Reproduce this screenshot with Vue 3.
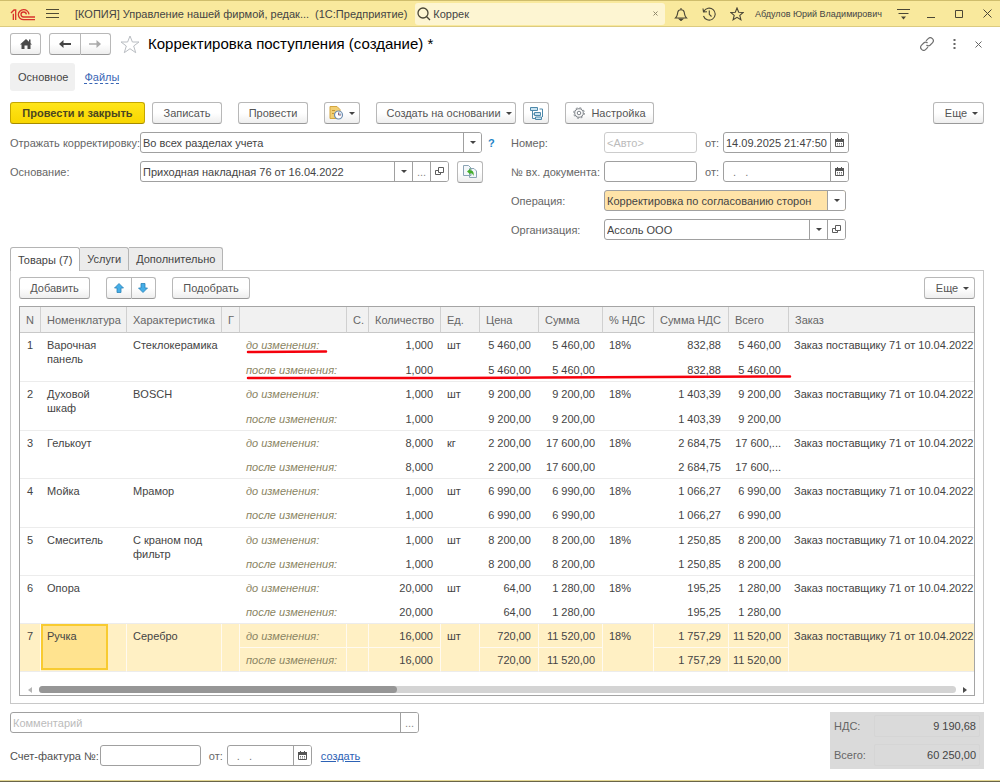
<script setup>
import { ref } from 'vue'

const search = ref('Коррек')
const scope = ref('Во всех разделах учета')
const basis = ref('Приходная накладная 76 от 16.04.2022')
const docDate = ref('14.09.2025 21:47:50')
const operation = ref('Корректировка по согласованию сторон')
const organization = ref('Ассоль ООО')
const selected = ref(7)

const order = 'Заказ поставщику 71 от 10.04.2022'
const rows = [
  { n: 1, name: 'Варочная панель', spec: 'Стеклокерамика', qty: '1,000', unit: 'шт', price: '5 460,00', sum: '5 460,00', vat: '832,88', total: '5 460,00' },
  { n: 2, name: 'Духовой шкаф', spec: 'BOSCH', qty: '1,000', unit: 'шт', price: '9 200,00', sum: '9 200,00', vat: '1 403,39', total: '9 200,00' },
  { n: 3, name: 'Гелькоут', spec: '', qty: '8,000', unit: 'кг', price: '2 200,00', sum: '17 600,00', vat: '2 684,75', total: '17 600,...' },
  { n: 4, name: 'Мойка', spec: 'Мрамор', qty: '1,000', unit: 'шт', price: '6 990,00', sum: '6 990,00', vat: '1 066,27', total: '6 990,00' },
  { n: 5, name: 'Смеситель', spec: 'С краном под фильтр', qty: '1,000', unit: 'шт', price: '8 200,00', sum: '8 200,00', vat: '1 250,85', total: '8 200,00' },
  { n: 6, name: 'Опора', spec: '', qty: '20,000', unit: 'шт', price: '64,00', sum: '1 280,00', vat: '195,25', total: '1 280,00' },
  { n: 7, name: 'Ручка', spec: 'Серебро', qty: '16,000', unit: 'шт', price: '720,00', sum: '11 520,00', vat: '1 757,29', total: '11 520,00' },
]
</script>

<template>
  <div class="window">
    <header class="topbar">
      <svg class="logo" width="26" height="14" viewBox="0 0 78 42" fill="none" stroke="#d8342c" stroke-width="4">
        <path d="M3 18L12 9H17V39M10 20V39" />
        <path d="M57 22A16 15 0 1 0 41 38H75M49 22A8 7.500 0 1 0 41 30H75" />
      </svg>
      <button class="bare menu" aria-label="Меню">
        <svg width="13" height="11" viewBox="0 0 13 11" stroke="#4f4a34" fill="none"><path d="M0 1.500H13M0 5.500H13M0 9.500H13" /></svg>
      </button>
      <span class="app">[КОПИЯ] Управление нашей фирмой, редак...</span>
      <span class="platform">(1С:Предприятие)</span>
      <div class="search">
        <svg width="14" height="14" viewBox="0 0 14 14" fill="none" stroke="#4a4636" stroke-width="1.300"><circle cx="6" cy="6" r="5" /><path d="M9.700 9.700L13 13" /></svg>
        <input v-model="search" aria-label="Поиск">
        <button class="bare" aria-label="Очистить">
          <svg width="5" height="5" viewBox="0 0 5 5" stroke="#8e876a" fill="none"><path d="M.5 .5L4.500 4.500M4.500 .5L.5 4.500" /></svg>
        </button>
      </div>
      <div class="system">
        <button class="bare" aria-label="Уведомления">
          <svg width="14" height="14" viewBox="0 0 14 14" fill="none" stroke="#4a4636" stroke-width="1.100"><path d="M1.500 11H12.500C10.500 9 10.700 8 10.300 5.500C10 3.600 8.800 2.700 7 2.700S4 3.600 3.700 5.500C3.300 8 3.500 9 1.500 11ZM7 2.500V1" /><path d="M5.300 12H8.700L7 13.500Z" fill="#4a4636" /></svg>
        </button>
        <button class="bare" aria-label="История">
          <svg width="14" height="14" viewBox="0 0 14 14" fill="none" stroke="#4a4636" stroke-width="1.100"><path d="M1.800 4.500A6 6 0 1 1 1.500 9M1 1.500L1.500 5L5 4.700M7.300 3.500V7.300L9.500 9.500" /></svg>
        </button>
        <button class="bare" aria-label="Избранное">
          <svg width="14" height="14" viewBox="0 0 14 14" fill="none" stroke="#4a4636" stroke-width="1.100"><path d="M7 1L8.700 5.200L13.200 5.500L9.800 8.400L10.900 12.800L7 10.400L3.100 12.800L4.200 8.400L.8 5.500L5.300 5.200Z" /></svg>
        </button>
        <span class="user">Абдулов Юрий Владимирович</span>
        <button class="bare" aria-label="Настройки">
          <svg width="13" height="12" viewBox="0 0 13 12" fill="none" stroke="#4a4636"><path d="M0 1.500H13M1.500 5.500H11.500" /><path d="M4 8.500H9L6.500 11.500Z" fill="#4a4636" stroke="none" /></svg>
        </button>
        <button class="bare" aria-label="Свернуть">
          <svg width="8" height="9" viewBox="0 0 8 9" stroke="#4a4636" fill="none"><path d="M0 8.500H8" /></svg>
        </button>
        <button class="bare" aria-label="Развернуть">
          <svg width="8" height="8" viewBox="0 0 8 8" stroke="#4a4636" fill="none"><path d="M.5 .5H7.500V7.500H.5Z" /></svg>
        </button>
        <button class="bare" aria-label="Закрыть окно">
          <svg width="9" height="9" viewBox="0 0 9 9" stroke="#4a4636" fill="none"><path d="M.5 .5L8.500 8.500M8.500 .5L.5 8.500" /></svg>
        </button>
      </div>
    </header>

    <main class="form">
      <div class="titlebar">
        <button class="btn home" aria-label="Домой">
          <svg width="12" height="10" viewBox="0 0 12 10" fill="#4a4a4a"><path d="M6 0L12 5.500H10.500V10H7.500V6.500H4.500V10H1.500V5.500H0Z" /><path d="M9 .5H10.500V4H9Z" /></svg>
        </button>
        <div class="pair">
          <button class="btn" aria-label="Назад">
            <svg width="12" height="8" viewBox="0 0 12 8" fill="#444"><path d="M4.500 0V3H12V5H4.500V8L0 4Z" /></svg>
          </button>
          <button class="btn" aria-label="Вперед">
            <svg width="12" height="8" viewBox="0 0 12 8" fill="#aaa"><path d="M7.500 0V3.200H0V4.800H7.500V8L12 4Z" /></svg>
          </button>
        </div>
        <button class="bare star" aria-label="В избранное">
          <svg width="20" height="19" viewBox="0 0 20 19" fill="none" stroke="#b9bdc2"><path d="M10 1L12.400 7H19L13.700 11L15.700 17.700L10 13.700L4.300 17.700L6.300 11L1 7H7.600Z" /></svg>
        </button>
        <h1>Корректировка поступления (создание) *</h1>
        <div class="titletools">
          <button class="bare" aria-label="Ссылка">
            <svg width="14" height="14" viewBox="0 0 14 14" fill="none" stroke="#707070" stroke-width="1.200"><path d="M6 3.800L8.200 1.600A2.400 2.400 0 0 1 12.400 5.800L10 8.200A2.400 2.400 0 0 1 6.500 8" /><path d="M8 10.200L5.800 12.400A2.400 2.400 0 0 1 1.600 8.200L4 5.800A2.400 2.400 0 0 1 7.500 6" /></svg>
          </button>
          <button class="bare" aria-label="Действия">
            <svg width="3" height="10" viewBox="0 0 3 10" fill="#666"><path d="M.5 0H2.500V2H.5ZM.5 4H2.500V6H.5ZM.5 8H2.500V10H.5Z" /></svg>
          </button>
          <button class="bare" aria-label="Закрыть">
            <svg width="7" height="7" viewBox="0 0 7 7" stroke="#666" fill="none"><path d="M.5 .5L6.500 6.500M6.500 .5L.5 6.500" /></svg>
          </button>
        </div>
      </div>

      <nav class="sections">
        <a class="current" href="#main">Основное</a>
        <a class="files" href="#files">Файлы</a>
      </nav>

      <div class="commands">
        <button class="btn primary">Провести и закрыть</button>
        <button class="btn write">Записать</button>
        <button class="btn post">Провести</button>
        <button class="btn report" aria-label="Отчеты">
          <svg width="15" height="14" viewBox="0 0 15 14" fill="none"><path d="M1 .5H8L11 3.500V12.500H1Z" fill="#f2cf73" stroke="#d3a640" /><path d="M3 4.500H6M3 7.500H5" stroke="#c59636" /><circle cx="9.500" cy="9" r="4" fill="#fff" stroke="#6d8db0" stroke-width="1.200" /><path d="M9.500 6V9H12.500A3 3 0 0 0 9.500 6Z" fill="#bed4e8" /><path d="M9.500 6.500V9H12" stroke="#8f6476" /></svg>
          <span class="caret"></span>
        </button>
        <button class="btn create">Создать на основании <span class="caret"></span></button>
        <button class="btn structure" aria-label="Структура подчиненности">
          <svg width="13" height="13" viewBox="0 0 13 13" fill="#c9e3f1" stroke="#4d88aa"><path d="M.5 .5H7.500V3.500H.5ZM4.500 5.500H10.500V8.500H4.500ZM5.500 10H11.500V12.500H5.500Z" /><path d="M2.500 3.500V11.500H5.500M2.500 7H4.500M9.500 2H12.500V10" fill="none" /></svg>
        </button>
        <button class="btn settings">
          <svg width="12" height="12" viewBox="0 0 12 12" fill="none" stroke="#7b8086"><circle cx="6" cy="6" r="4.300" /><circle cx="6" cy="6" r="1.800" /><circle cx="6" cy="6" r="5.300" stroke-dasharray="2 2.160" /></svg>
          Настройка
        </button>
        <button class="btn more">Еще <span class="caret"></span></button>
      </div>

      <div class="fields">
        <div class="left">
          <label for="scope">Отражать корректировку:</label>
          <div class="line">
            <div class="box drop wide">
              <select id="scope" v-model="scope"><option>Во всех разделах учета</option></select>
              <span class="arrow"><span class="caret"></span></span>
            </div>
            <a class="help" href="#help">?</a>
          </div>
          <label for="basis">Основание:</label>
          <div class="line">
            <div class="box basis">
              <input id="basis" v-model="basis">
              <button aria-label="Выбрать основание"><span class="caret"></span></button>
              <button class="dim" aria-label="Показать все">...</button>
              <button aria-label="Открыть основание">
                <svg width="9" height="9" viewBox="0 0 9 9" fill="none" stroke="#5c5c5c"><path d="M3.500 .5H8.500V5.500H3.500ZM3.500 3.500H.5V7.500H5.500V5.500" /></svg>
              </button>
            </div>
            <button class="btn refill" aria-label="Заполнить по основанию">
              <svg width="14" height="13" viewBox="0 0 14 13" fill="#f3f7fa" stroke="#8ba4b5"><path d="M.5 .5H5.500L8 3V10.500H.5ZM6.500 3.500H11L13.500 6V12.500H6.500Z" /><path d="M4 6.500L7.500 3.500V5.500C10 5.500 11.300 7.500 10.500 11C9.800 9 9 8 7.500 8V9.500Z" fill="#43ae2a" stroke="none" /></svg>
            </button>
          </div>
        </div>
        <div class="right">
          <label for="number">Номер:</label>
          <div class="line">
            <div class="box pale short"><input id="number" placeholder="&lt;Авто&gt;"></div>
            <label class="from" for="date">от:</label>
            <div class="box date">
              <input id="date" v-model="docDate">
              <button aria-label="Календарь"><svg class="cal" width="9" height="9" viewBox="0 0 9 9"><path d="M.5 1.500H8.500V8.500H.5Z" fill="none" stroke="#555" /><path d="M0 1H9V4H0ZM2 0H3V2H2ZM6 0H7V2H6Z" fill="#555" /><path d="M2 5.500H7M2 7H7" stroke="#777" stroke-dasharray="1 1" /></svg></button>
            </div>
          </div>
          <label for="incoming">№ вх. документа:</label>
          <div class="line">
            <div class="box short"><input id="incoming"></div>
            <label class="from" for="indate">от:</label>
            <div class="box date">
              <input id="indate" class="dots" placeholder=".   .">
              <button aria-label="Календарь"><svg class="cal" width="9" height="9" viewBox="0 0 9 9"><path d="M.5 1.500H8.500V8.500H.5Z" fill="none" stroke="#555" /><path d="M0 1H9V4H0ZM2 0H3V2H2ZM6 0H7V2H6Z" fill="#555" /><path d="M2 5.500H7M2 7H7" stroke="#777" stroke-dasharray="1 1" /></svg></button>
            </div>
          </div>
          <label for="operation">Операция:</label>
          <div class="line">
            <div class="box drop accent mid">
              <select id="operation" v-model="operation"><option>Корректировка по согласованию сторон</option></select>
              <span class="arrow"><span class="caret"></span></span>
            </div>
          </div>
          <label for="org">Организация:</label>
          <div class="line">
            <div class="box mid">
              <input id="org" v-model="organization">
              <button aria-label="Выбрать организацию"><span class="caret"></span></button>
              <button aria-label="Открыть организацию">
                <svg width="9" height="9" viewBox="0 0 9 9" fill="none" stroke="#5c5c5c"><path d="M3.500 .5H8.500V5.500H3.500ZM3.500 3.500H.5V7.500H5.500V5.500" /></svg>
              </button>
            </div>
          </div>
        </div>
      </div>

      <div class="tabs" role="tablist">
        <button class="tab active" role="tab" aria-selected="true">Товары (7)</button>
        <button class="tab" role="tab" aria-selected="false">Услуги</button>
        <button class="tab" role="tab" aria-selected="false">Дополнительно</button>
      </div>

      <section class="panel">
        <div class="commands">
          <button class="btn add">Добавить</button>
          <div class="pair arrows">
            <button class="btn" aria-label="Вверх"><svg width="10" height="10" viewBox="0 0 10 10" fill="#45aee8" stroke="#2b83b8" stroke-width=".8"><path d="M5 .5L9.500 5H7V9.500H3V5H.5Z" /></svg></button>
            <button class="btn" aria-label="Вниз"><svg width="10" height="10" viewBox="0 0 10 10" fill="#45aee8" stroke="#2b83b8" stroke-width=".8"><path d="M5 9.500L9.500 5H7V.5H3V5H.5Z" /></svg></button>
          </div>
          <button class="btn pick">Подобрать</button>
          <button class="btn more">Еще <span class="caret"></span></button>
        </div>

        <div class="grid">
          <table>
            <colgroup>
              <col class="c21"><col class="c86"><col class="c95"><col class="c18"><col class="c107"><col class="c22"><col class="c72">
              <col class="c39"><col class="c59"><col class="c64"><col class="c51"><col class="c75"><col class="c60"><col>
            </colgroup>
            <thead>
              <tr>
                <th>N</th><th>Номенклатура</th><th>Характеристика</th><th>Г</th><th></th><th>С.</th><th>Количество</th>
                <th>Ед.</th><th>Цена</th><th>Сумма</th><th>% НДС</th><th>Сумма НДС</th><th>Всего</th><th>Заказ</th>
              </tr>
            </thead>
            <tbody v-for="r in rows" :key="r.n" :class="{ selected: r.n === selected }" @click="selected = r.n">
              <tr>
                <td rowspan="2">{{ r.n }}</td>
                <td rowspan="2" class="name"><div>{{ r.name }}</div></td>
                <td rowspan="2" class="spec">{{ r.spec }}</td>
                <td rowspan="2"></td>
                <td class="state">до изменения:</td>
                <td></td>
                <td class="num">{{ r.qty }}</td>
                <td rowspan="2">{{ r.unit }}</td>
                <td class="num">{{ r.price }}</td>
                <td class="num">{{ r.sum }}</td>
                <td rowspan="2">18%</td>
                <td class="num">{{ r.vat }}</td>
                <td class="num">{{ r.total }}</td>
                <td rowspan="2" class="order">{{ order }}</td>
              </tr>
              <tr>
                <td class="state">после изменения:</td>
                <td></td>
                <td class="num">{{ r.qty }}</td>
                <td class="num">{{ r.price }}</td>
                <td class="num">{{ r.sum }}</td>
                <td class="num">{{ r.vat }}</td>
                <td class="num">{{ r.total }}</td>
              </tr>
            </tbody>
          </table>
          <svg class="marks" width="546" height="32" viewBox="0 0 546 32" fill="none" stroke="#f5000c" stroke-width="2.500" stroke-linecap="round">
            <path d="M2 4L80 3.500M2 30L200 30L300 29.500L544 28.500" />
          </svg>
          <div class="scroll">
            <svg width="4" height="6" viewBox="0 0 4 6" fill="#b5b5b5"><path d="M4 0V6L0 3Z" /></svg>
            <div class="track"><div class="thumb"></div></div>
            <svg width="4" height="6" viewBox="0 0 4 6" fill="#4c4c4c"><path d="M0 0V6L4 3Z" /></svg>
          </div>
        </div>
      </section>

      <footer class="bottom">
        <div class="extra">
          <div class="box comment">
            <input placeholder="Комментарий" aria-label="Комментарий">
            <button class="dim" aria-label="Открыть комментарий">...</button>
          </div>
          <div class="line">
            <label class="dark" for="invoice">Счет-фактура №:</label>
            <div class="box invoice"><input id="invoice"></div>
            <label class="from" for="invdate">от:</label>
            <div class="box invdate">
              <input id="invdate" class="dots" placeholder=".   .">
              <button aria-label="Календарь"><svg class="cal" width="9" height="9" viewBox="0 0 9 9"><path d="M.5 1.500H8.500V8.500H.5Z" fill="none" stroke="#555" /><path d="M0 1H9V4H0ZM2 0H3V2H2ZM6 0H7V2H6Z" fill="#555" /><path d="M2 5.500H7M2 7H7" stroke="#777" stroke-dasharray="1 1" /></svg></button>
            </div>
            <a class="make" href="#create">создать</a>
          </div>
        </div>
        <dl class="totals">
          <dt>НДС:</dt><dd>9 190,68</dd>
          <dt>Всего:</dt><dd>60 250,00</dd>
        </dl>
      </footer>
    </main>
  </div>
</template>

<style>
body { margin: 0; background: #fff; }
</style>

<style scoped>
* { box-sizing: border-box; }
.window {
  min-height: 100vh;
  display: flex;
  flex-direction: column;
  font: 11px/14px "Liberation Sans", Arial, sans-serif;
  color: #444;
  background: #fff;
  border-bottom: 1px solid #6a6547;
  box-shadow: inset 0 -1px #e3d794;
}
button, input, select { font: inherit; color: inherit; margin: 0; }
svg { display: block; flex: none; }
.bare { border: 0; background: none; padding: 0; display: flex; align-items: center; justify-content: center; }

.topbar {
  height: 27px;
  display: flex;
  align-items: center;
  padding: 0 6px 0 10px;
  background: #f9e99d;
  border-top: 1px solid #cfbd6c;
  border-bottom: 1px solid #dccb80;
  white-space: nowrap;
}
.menu { margin-left: 10px; }
.app { margin-left: 16px; }
.platform { margin-left: 6px; }
.search {
  flex: 1;
  display: flex;
  align-items: center;
  height: 22px;
  margin-left: 8px;
  padding: 0 7px 0 2px;
  background: #fdf5d2;
  border-radius: 3px;
}
.search input { flex: 1; min-width: 0; border: 0; background: none; padding: 0 2px; outline: 0; }
.system { display: flex; align-items: center; gap: 14px; margin-left: 9px; }
.user { min-width: 130px; margin: 0 -3px; font-size: 9px; }
.system .bare { min-width: 14px; }

.form { flex: 1; display: flex; flex-direction: column; padding: 6px 16px 12px 10px; }
.btn {
  height: 22px;
  display: flex;
  align-items: center;
  justify-content: center;
  padding: 0;
  border: 1px solid #b8b8b8;
  border-bottom-color: #999;
  border-radius: 3px;
  background: linear-gradient(#fff 50%, #eee);
  white-space: nowrap;
  color: #555;
}
.caret { width: 0; height: 0; border: 3px solid transparent; border-top-color: #444; border-bottom: 0; }
.titlebar { display: flex; align-items: center; }
.home { width: 31px; }
.pair { display: flex; width: 62px; margin-left: 8px; }
.pair .btn { flex: 1; }
.pair .btn:first-child { border-radius: 3px 0 0 3px; }
.pair .btn:last-child { border-radius: 0 3px 3px 0; border-left: 0; }
.star { margin-left: 9px; }
h1 { margin: 0 0 0 8px; font-size: 15px; line-height: 22px; font-weight: normal; color: #000; }
.titletools { display: flex; align-items: center; gap: 19px; margin: 0 2px 0 auto; }

.sections { display: flex; align-items: center; margin-top: 8px; }
.sections a { color: inherit; text-decoration: none; }
.sections .current { padding: 7px 7px 7px 8px; background: #f0f0f0; border-radius: 3px; }
.sections .files { margin-left: 9px; color: #3a66b5; border-bottom: 1px dashed #3a66b5; line-height: 12px; }

.commands { display: flex; }
.sections + .commands { margin-top: 11px; }
.primary { width: 135px; background: linear-gradient(#ffe51a, #f8d600); border-color: #c4a600; border-bottom-color: #a58b00; font-weight: bold; color: #4b4620; }
.write { width: 70px; margin-left: 7px; }
.post { width: 70px; margin-left: 16px; }
.report { width: 36px; margin-left: 16px; gap: 5px; }
.create { width: 140px; margin-left: 16px; gap: 5px; padding-left: 6px; }
.structure { width: 26px; margin-left: 7px; }
.settings { width: 89px; margin-left: 16px; gap: 6px; }
.more { width: 51px; margin-left: auto; gap: 5px; padding-left: 6px; }

.fields { display: flex; margin-top: 8px; gap: 28px; }
.left, .right { display: grid; grid-auto-rows: 21px; row-gap: 8px; align-items: center; align-content: start; }
.left { grid-template-columns: 130px 343px; }
.right { grid-template-columns: 93px 246px; }
label { color: #666; white-space: nowrap; }
.line { display: flex; align-items: center; }
.box {
  position: relative;
  display: flex;
  height: 21px;
  border: 1px solid #a0a0a0;
  border-radius: 3px;
  background: #fff;
  overflow: hidden;
}
.box input, .box select {
  flex: 1;
  min-width: 0;
  width: 100%;
  border: 0;
  padding: 0 2px;
  background: none;
  outline: 0;
  appearance: none;
}
.box input::placeholder { color: #bbb; opacity: 1; }
.box .dots { padding-left: 9px; white-space: pre; }
.box .dots::placeholder { color: #777; }
.box button, .arrow {
  flex: none;
  width: 18px;
  display: flex;
  align-items: center;
  justify-content: center;
  border: 0;
  border-left: 1px solid #a0a0a0;
  padding: 0;
  background: #fff;
}
.box .dim { color: #888; }
.arrow { pointer-events: none; }
.box.wide { width: 342px; flex: none; }
.help { margin-left: 6px; color: #2384c6; font-weight: bold; text-decoration: none; }
.basis { width: 309px; }
.refill { width: 26px; margin-left: 8px; }
.pale { border-color: #ccc; }
.short { width: 93px; }
.from { margin: 0 4px 0 8px; }
.date { width: 126px; flex: none; }
.mid { width: 242px; }
.accent { background: #ffe3a8; }

.tabs { display: flex; margin-top: 7px; }
.tab {
  height: 23px;
  padding: 0 7px;
  border: 1px solid #b4b4b4;
  border-bottom: 0;
  border-left: 0;
  background: #ececec;
  border-radius: 0 3px 0 0;
}
.tab.active { border-left: 1px solid #b4b4b4; border-radius: 3px 3px 0 0; background: #fff; position: relative; margin-bottom: -1px; height: 24px; }
.panel { flex: 1; display: flex; flex-direction: column; border: 1px solid #c8c8c8; padding: 6px 8px 7px; }
.add { width: 71px; }
.arrows { width: 50px; margin-left: 16px; }
.pick { width: 78px; margin-left: 16px; }
.grid { flex: 1; display: flex; flex-direction: column; position: relative; border: 1px solid #a5a5a5; margin-top: 7px; }
table { width: 100%; table-layout: fixed; border-collapse: separate; border-spacing: 0; }
.c21 { width: 21px; } .c86 { width: 86px; } .c95 { width: 95px; } .c18 { width: 18px; } .c107 { width: 107px; }
.c22 { width: 22px; } .c72 { width: 72px; } .c39 { width: 39px; } .c59 { width: 59px; } .c64 { width: 64px; }
.c51 { width: 51px; } .c75 { width: 75px; } .c60 { width: 60px; }
th {
  height: 26px;
  padding: 0 0 0 6px;
  text-align: left;
  font-weight: normal;
  color: #666;
  background: #f1f1f1;
  border-right: 1px solid #d0d0d0;
  border-bottom: 1px solid #c8c8c8;
  white-space: nowrap;
  overflow: hidden;
}
th:last-child { border-right: 0; }
td { height: 24px; padding: 5px 0 3px 6px; vertical-align: top; white-space: nowrap; overflow: hidden; }
tbody tr:first-child td:first-child { padding-left: 7px; }
td[rowspan] { border-bottom: 1px solid #ececec; }
tr + tr td { border-bottom: 1px solid #ececec; }
td.name { padding: 0 18px 0 0; white-space: normal; height: 48px; }
td.name div { padding: 5px 0 15px 6px; }
td.spec { white-space: normal; padding-bottom: 14px; padding-right: 15px; }
.num { text-align: right; padding-right: 8px; padding-left: 0; }
.state { font-style: italic; color: #8a8462; }
td.order { padding-left: 5px; }
.selected td { background: #fff0c4; border-right: 1px solid #fffaf0; }
.selected .num { padding-right: 7px; }
.selected td.order { border-right: 0; }
.selected tr:first-child td:not([rowspan]) { border-bottom: 1px solid #fffaf0; }
.selected td.name div { height: 46px; padding: 3px 4px; background: #ffe38f; border: 2px solid #f8cb30; }
.marks { position: absolute; left: 226px; top: 41px; }
.scroll { display: flex; align-items: center; gap: 7px; margin: auto 7px 2px 8px; }
.track { flex: 1; height: 7px; border-radius: 4px; background: #d4d4d4; }
.thumb { width: 39%; height: 7px; border-radius: 4px; background: #969696; }

.bottom { display: flex; justify-content: space-between; margin-top: 8px; }
.extra { display: flex; flex-direction: column; gap: 12px; }
.comment { width: 409px; }
.dark { color: #505050; }
.invoice { width: 101px; margin-left: 1px; }
.invdate { width: 85px; }
.make { margin-left: 9px; color: #2d62b5; }
.totals {
  display: grid;
  grid-template-columns: 40px 1fr;
  align-items: center;
  width: 154px;
  height: 57px;
  margin: 0;
  padding: 0 4px;
  background: #dadada;
}
.totals dt { color: #666; }
.totals dd { margin: 0; padding: 3px; text-align: right; border: 1px solid #d5d5d5; border-radius: 2px; }
</style>
